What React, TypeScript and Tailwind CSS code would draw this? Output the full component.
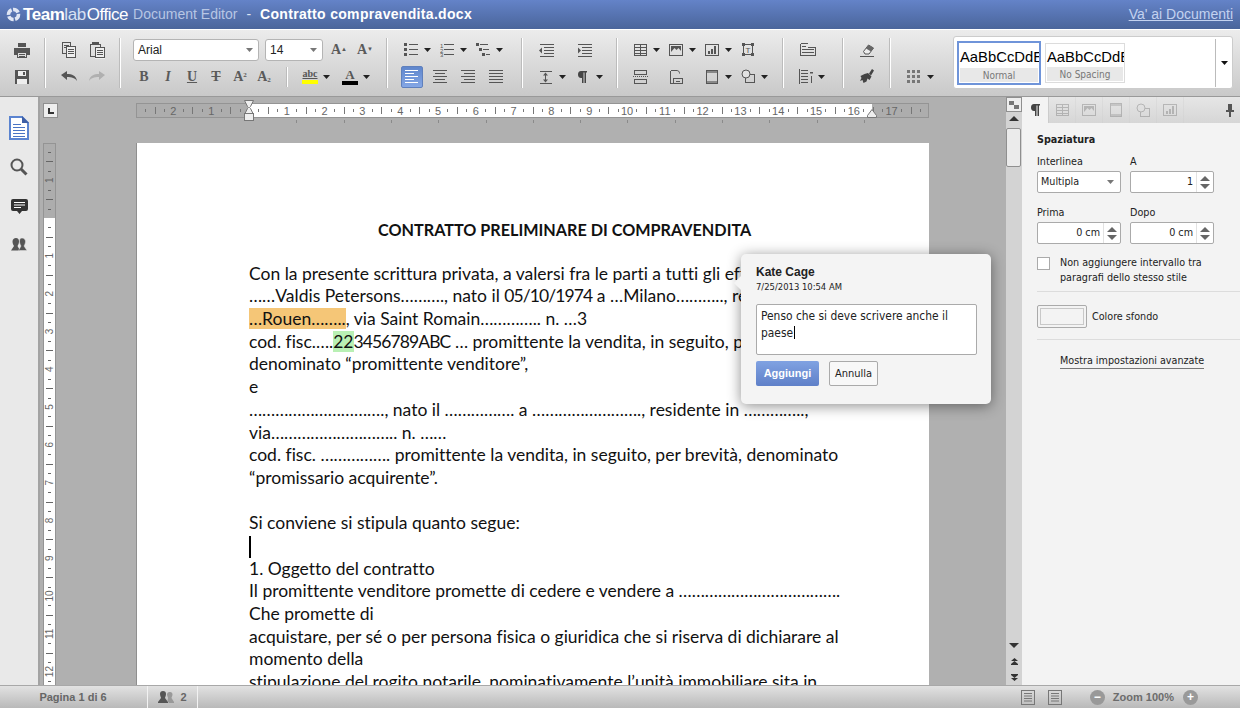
import type { ReactNode } from "react";

const sans = "font-['Liberation_Sans',Arial,sans-serif]";
const ui = "font-['DejaVu_Sans_Condensed','Noto_Sans',sans-serif]";

function I({ children, w = 18, h = 18 }: { children: ReactNode; w?: number; h?: number }) {
  return (
    <svg width={w} height={h} viewBox={`0 0 ${w} ${h}`} fill="none" stroke="#555" strokeWidth="1" className="shrink-0">
      {children}
    </svg>
  );
}

const P = ({ d, c = "#555" }: { d: string; c?: string }) => <path d={d} stroke={c} shapeRendering="crispEdges" />;
const F = ({ d, c = "#555" }: { d: string; c?: string }) => <path d={d} fill={c} stroke="none" />;

const Arrow = ({ c = "#222" }: { c?: string }) => (
  <svg width="7" height="4" viewBox="0 0 7 4" className="shrink-0">
    <path d="M0 0h7L3.5 4z" fill={c} />
  </svg>
);

const icons: Record<string, ReactNode> = {
  print: <I><F d="M5 2h8v4H5z" /><F d="M1 7h16v7h-3v-3H4v3H1z" /><P d="M4.5 11.5h9v5h-9z" /><P d="M6 13.5h6M6 15.5h6" /></I>,
  save: <I><F d="M2 2h14v14H2z" /><F d="M5 3h8v5H5z" c="#eee" /><F d="M4 11h10v5H4z" c="#eee" /><F d="M10 4h2v3h-2z" /></I>,
  copy: <I><P d="M2.5 1.5h8v11h-8zM4 4.5h5M4 6.5h5" /><F d="M6 5h10v12H6z" c="#eee" /><P d="M6.5 5.5h9v11h-9zM8 8.5h6M8 10.5h6M8 12.5h6" /></I>,
  paste: <I><P d="M2.5 3.5h10v12h-10z" /><F d="M4 1h7v3H4z" /><F d="M7 6h10v12H7z" c="#eee" /><P d="M7.5 6.5h9v10h-9zM9 9.5h6M9 11.5h6M9 13.5h6" /></I>,
  undo: <I><F d="M1 7l6-4v3c5 0 9 1.500 10 7-2-3-5-4-10-4v3z" /></I>,
  redo: <I><F d="M17 7l-6-4v3C6 6 2 7.500 1 13c2-3 5-4 10-4v3z" c="#b0b0b0" /></I>,
  bullets: <I w={14} h={14}><F d="M0 0h3v3H0zM0 5h3v3H0zM0 10h3v3H0z" /><P d="M5 1.500h9M5 6.500h9M5 11.500h9" /></I>,
  numbers: (
    <I w={14} h={14}>
      <text x="0" y="4.500" fontSize="6" fill="#555" stroke="none">1</text>
      <text x="0" y="9.500" fontSize="6" fill="#555" stroke="none">2</text>
      <text x="0" y="14" fontSize="6" fill="#555" stroke="none">3</text>
      <P d="M4 1.500h10M4 6.500h10M4 11.500h10" />
    </I>
  ),
  multi: <I w={14} h={14}><F d="M0 0h3v3H0zM3 5h3v3H3zM6 10h3v3H6z" /><P d="M4 1.500h8M7 6.500h6M10 11.500h4" /></I>,
  indentL: <I w={15} h={14}><P d="M1 1.500h14M5 4.500h10M5 7.500h10M5 10.500h10M1 13.500h14" /><F d="M3 4.500v6L0 7.500z" /></I>,
  indentR: <I w={15} h={14}><P d="M1 1.500h14M5 4.500h10M5 7.500h10M5 10.500h10M1 13.500h14" /><F d="M1 4.500v6l3-3z" /></I>,
  spacing: <I w={14} h={14}><P d="M1 1.500h12M1 13.500h12M6.500 4v7" /><F d="M6.500 2.500L9 5.500H4zM6.500 12.500L4 9.500h5z" /></I>,
  pilcrow: <I w={9} h={12}><F d="M3 0h6v1.500H8V12H6.500V1.500h-1V12H4V7h-1C1 7 0 5.500 0 3.500S1 0 3 0z" c="#444" /></I>,
  table: <I w={14} h={14}><P d="M1.500 1.500h12v11h-12zM1.500 4.500h12M1.500 7.500h12M1.500 10.500h12M7.500 1.500v11" /></I>,
  image: <I w={14} h={14}><P d="M.5 1.500h13v11H.5z" /><F d="M2 3h10v5L9.500 5 7.500 7 5.500 5 2 9z" /></I>,
  chart: <I w={14} h={14}><P d="M.5 1.500h13v11H.5z" /><F d="M3 8h2v3H3zM6 6h2v5H6zM9 3h2v8H9z" /></I>,
  textbox: <I w={14} h={14}><P d="M2.500 1.500h9v10h-9z" /><F d="M1 0h3v3H1zM10 0h3v3h-3zM1 10h3v3H1zM10 10h3v3h-3z" /><text x="4.500" y="10" fontSize="8" fill="#555" stroke="none">T</text></I>,
  pagebreak: <I w={15} h={14}><P d="M1.500 .5h12v4h-12zM1.500 9.500h12v4h-12z" /><path d="M0 6.500h15" stroke="#555" strokeDasharray="1 1" /></I>,
  footnote: <I w={15} h={14}><P d="M1.500 .5h6M1.500 .5v13h3" /><path d="M7.500 .5c2 0 3 1 3 3" stroke="#555" /><P d="M4.500 8.500h9v5h-9zM7 11h4" /></I>,
  header: <I w={13} h={14}><P d="M.5 .5h11v13H.5z" /><F d="M1 1h10v2H1zM1 11h10v2H1z" c="#888" /></I>,
  shape: <I w={15} h={15}><circle cx="5" cy="5" r="4" stroke="#555" fill="#e2e2e2" /><P d="M8.500 5.500h5v8h-9v-5" /></I>,
  columns: <I w={17} h={13}><P d="M.5 .5h7M.5 .5v12h15v-8h-8M2 3.500h4M2 6.500h12M2 9.500h12" /></I>,
  lineNum: <I w={15} h={15}><P d="M3 1.500h7M3 4.500h7M3 7.500h7M3 10.500h7M3 13.500h7M1.500 0v15" /><P d="M13.500 6.500v7" /><F d="M12 3h3v1.500h-3z" /></I>,
  eraser: <I w={16} h={16}><path d="M4.500 9.500l5-6.500 5 3-4.500 6H6z" fill="#ececec" stroke="#555" /><F d="M9.500 3l5 3-2.500 3.500-5-3z" c="#666" /><P d="M1 14.500h14" /></I>,
  brush: <I w={14} h={15}><F d="M9 4.500L12 0l2 1.500L11 6.500zM4.500 5L8 4l3.500 3.500-2 3.500-2-1.500-1 3L3.500 14 2.500 11 0 12l1.500-3-1-2z" c="#444" /></I>,
  grid: <I w={14} h={13}><F d="M0 0h3v3H0zM5 0h3v3H5zM10 0h3v3h-3zM0 5h3v3H0zM5 5h3v3H5zM10 5h3v3h-3zM0 10h3v3H0zM5 10h3v3H5zM10 10h3v3h-3z" c="#777" /></I>,
};

const align = (lines: number[], white = false, right = false) => (
  <svg width="14" height="14" viewBox="0 0 14 14" className="shrink-0">
    {lines.map((w, i) => {
      const x = right ? 14 - w : w === 10 && !white ? 2 : 0;
      return <rect key={i} x={x} y={i * 3 + 0} width={w} height="1" fill={white ? "#fff" : "#555"} />;
    })}
  </svg>
);

function Glyph({ children, italic = false }: { children: ReactNode; italic?: boolean }) {
  return (
    <span className={`font-['Liberation_Serif',serif] text-[14px] font-bold leading-none text-[#5a5a5a] ${italic ? "italic" : ""}`}>
      {children}
    </span>
  );
}

function Tool({ icon, arrow, spacer, width = "w-[36px]" }: { icon: ReactNode; arrow?: boolean; spacer?: boolean; width?: string }) {
  return (
    <div className={`flex h-[27px] shrink-0 items-center justify-center gap-[5px] ${width}`}>
      <div className="flex w-[16px] justify-center">{icon}</div>
      {arrow ? <Arrow /> : spacer ? <div className="w-[7px]" /> : null}
    </div>
  );
}

const Row = ({ children, pad = "" }: { children: ReactNode; pad?: string }) => <div className={`flex h-[27px] items-center ${pad}`}>{children}</div>;

const Sep = () => <div className="mt-[2px] h-[50px] w-[2px] shrink-0 border-r border-r-white bg-[#bcbcbc]" />;

function Combo({ label, width }: { label: string; width: string }) {
  return (
    <div className={`flex h-[22px] items-center justify-between rounded-[3px] border border-[#b4b4b4] bg-white pl-[4px] pr-[5px] text-[12px] text-[#222] ${width}`}>
      <span>{label}</span>
      <Arrow c="#777" />
    </div>
  );
}

function Toolbar() {
  return (
    <div className={`flex h-[66px] shrink-0 bg-gradient-to-b from-[#ececec] to-[#c9c9c9] pt-[6px] ${sans}`}>
      <div className="w-[44px]">
        <Tool icon={icons.print} width="w-[44px]" />
        <Tool icon={icons.save} width="w-[44px]" />
      </div>
      <Sep />
      <div className="w-[73px]">
        <Row pad="pl-[9px]"><Tool icon={icons.copy} width="w-[28px]" /><Tool icon={icons.paste} width="w-[28px]" /></Row>
        <Row pad="pl-[9px]"><Tool icon={icons.undo} width="w-[28px]" /><Tool icon={icons.redo} width="w-[28px]" /></Row>
      </div>
      <Sep />
      <div className="w-[265px]">
        <Row pad="pl-[12px]">
          <Combo label="Arial" width="w-[126px]" />
          <div className="ml-[6px]"><Combo label="14" width="w-[58px]" /></div>
          <div className="ml-[3px]"><Tool width="w-[26px]" icon={<Glyph>A<sup className="text-[6px]">▲</sup></Glyph>} /></div>
          <Tool width="w-[26px]" icon={<Glyph>A<sup className="text-[6px]">▼</sup></Glyph>} />
        </Row>
        <Row pad="pl-[11px]">
          <Tool width="w-[24px]" icon={<Glyph>B</Glyph>} />
          <Tool width="w-[24px]" icon={<Glyph italic>I</Glyph>} />
          <Tool width="w-[24px]" icon={<Glyph><span className="underline">U</span></Glyph>} />
          <Tool width="w-[24px]" icon={<Glyph><span className="line-through">T</span></Glyph>} />
          <Tool width="w-[24px]" icon={<Glyph>A<sup className="text-[7px]">2</sup></Glyph>} />
          <Tool width="w-[24px]" icon={<Glyph>A<sub className="text-[7px]">2</sub></Glyph>} />
          <div className="ml-[10px] h-[20px] w-[2px] border-r border-r-white bg-[#bcbcbc]" />
          <div className="ml-[10px]">
            <Tool arrow icon={<div className="flex flex-col items-center"><span className="font-['Liberation_Serif',serif] text-[10px] font-bold leading-[10px] text-[#555] underline">abc</span><div className="mt-[1px] h-[4px] w-[16px] bg-[#ffff00]" /></div>} />
          </div>
          <div className="ml-[4px]">
            <Tool arrow icon={<div className="flex flex-col items-center"><span className="font-['Liberation_Serif',serif] text-[13px] font-bold leading-[12px] text-[#555]">A</span><div className="h-[4px] w-[16px] bg-black" /></div>} />
          </div>
        </Row>
      </div>
      <Sep />
      <div className="w-[133px]">
        <Row pad="pl-[11px]"><Tool arrow icon={icons.bullets} /><Tool arrow icon={icons.numbers} /><Tool arrow icon={icons.multi} /></Row>
        <Row pad="pl-[10px]">
          <div className="flex w-[28px] justify-center">
            <div className="flex h-[22px] w-[22px] items-center justify-center rounded-[2px] border border-[#5f80bd] bg-gradient-to-b from-[#5f86cc] to-[#85a7e5]">{align([13, 9, 13, 9, 13], true)}</div>
          </div>
          <Tool width="w-[28px]" icon={align([14, 10, 14, 10, 14])} />
          <Tool width="w-[28px]" icon={align([14, 11, 14, 11, 14], false, true)} />
          <Tool width="w-[28px]" icon={align([14, 14, 14, 14, 14])} />
        </Row>
      </div>
      <Sep />
      <div className="w-[93px]">
        <Row pad="pl-[4px]"><Tool width="w-[38px]" icon={icons.indentL} /><Tool width="w-[38px]" icon={icons.indentR} /></Row>
        <Row pad="pl-[10px]"><Tool arrow width="w-[37px]" icon={icons.spacing} /><Tool arrow width="w-[37px]" icon={icons.pilcrow} /></Row>
      </div>
      <Sep />
      <div className="w-[164px]">
        <Row pad="pl-[10px]"><Tool arrow icon={icons.table} /><Tool arrow icon={icons.image} /><Tool arrow icon={icons.chart} /><Tool spacer icon={icons.textbox} /></Row>
        <Row pad="pl-[10px]"><Tool spacer icon={icons.pagebreak} /><Tool spacer icon={icons.footnote} /><Tool arrow icon={icons.header} /><Tool arrow icon={icons.shape} /></Row>
      </div>
      <Sep />
      <div className="w-[58px]">
        <Tool width="w-[48px]" icon={icons.columns} />
        <Row pad="pl-[9px]"><Tool arrow icon={icons.lineNum} /></Row>
      </div>
      <Sep />
      <div className="w-[45px]">
        <Tool width="w-[45px]" icon={icons.eraser} />
        <Tool width="w-[45px]" icon={icons.brush} />
      </div>
      <Sep />
      <div className="w-[62px] pt-[27px]">
        <Row pad="pl-[11px]"><Tool arrow icon={icons.grid} /></Row>
      </div>
      <div className="flex h-[53px] w-[280px] items-center rounded-[3px] border border-[#ccc] bg-white pl-[3px]">
        <StyleThumb label="Normal" active />
        <div className="ml-[4px]"><StyleThumb label="No Spacing" /></div>
        <div className="ml-auto flex h-[48px] w-[17px] items-center justify-center border-l border-l-[#bbb]"><Arrow c="#111" /></div>
      </div>
    </div>
  );
}

function StyleThumb({ label, active }: { label: string; active?: boolean }) {
  return (
    <div className={`flex flex-col overflow-hidden bg-white ${active ? "h-[44px] w-[84px] border-2 border-[#6f94d9]" : "h-[40px] w-[80px] border border-[#dcdcdc]"}`}>
      <div className={`min-h-0 flex-1 overflow-hidden whitespace-nowrap pl-[1px] text-[14.8px] leading-[20px] text-black ${active ? "pt-[4px]" : "pt-[3px]"}`}>AaBbCcDdEe</div>
      <div className={`mx-[1px] mb-[1px] h-[14px] shrink-0 bg-[#e8e8e8] text-center text-[10px] leading-[15px] text-[#777] ${ui}`}>{label}</div>
    </div>
  );
}

function HRuler() {
  const o = 113;
  const cm = 37.8;
  const marks = Array.from({ length: 84 }, (_, i) => i - 12);
  return (
    <svg width="793" height="24" className="block overflow-visible">
      <rect x="0.5" y="0.5" width="792" height="14" fill="#adadad" stroke="#949494" />
      <rect x={o} y="1" width="623" height="13" fill="#fff" />
      {marks.map((q) => {
        const x = o + (q * cm) / 4;
        if (x < 2 || x > 790) return null;
        if (q === 0) return null;
        if (q % 4 === 0)
          return <text key={q} x={x} y="11.500" fontSize="11" textAnchor="middle" fill="#666" fontFamily="Liberation Sans">{Math.abs(q / 4)}</text>;
        if (q % 2 === 0) return <rect key={q} x={Math.round(x)} y="4" width="1" height="7" fill="#777" />;
        return <rect key={q} x={Math.round(x)} y="6" width="1" height="3" fill="#777" />;
      })}
      {Array.from({ length: 13 }, (_, i) => (
        <rect key={i} x={Math.round(o + 47.3 * (i + 1))} y="17" width="1" height="3" fill="#8a8a8a" />
      ))}
      <path d="M108.500-2.500h9l-3 6 -1 1 1 1 3 6h-9l3-6 1-1-1-1z" fill="#eee" stroke="#777" />
      <rect x="108.500" y="10.500" width="9" height="7" fill="#eee" stroke="#777" />
      <path d="M731.500 12.500l4.500-6 4.500 6v2h-9z" fill="#eee" stroke="#777" />
    </svg>
  );
}

function VRuler() {
  const o = 75;
  const cm = 37.8;
  const marks = Array.from({ length: 59 }, (_, i) => i - 8);
  return (
    <svg width="13" height="560" className="block shrink-0">
      <rect x="0.5" y="0.5" width="12" height="559" fill="#fff" stroke="#949494" />
      <rect x="1" y="1" width="11" height={o - 1} fill="#adadad" />
      {marks.map((q) => {
        const y = o + (q * cm) / 4;
        if (y < 3 || q === 0) return null;
        if (q % 4 === 0)
          return <text key={q} x="6.500" y={y} fontSize="10" textAnchor="middle" dominantBaseline="central" fill="#666" fontFamily="Liberation Sans" transform={`rotate(-90 6.500 ${y})`}>{Math.abs(q / 4)}</text>;
        if (q % 2 === 0) return <rect key={q} x="3" y={Math.round(y)} width="7" height="1" fill="#666" />;
        return <rect key={q} x="5" y={Math.round(y)} width="3" height="1" fill="#666" />;
      })}
    </svg>
  );
}

const Num = ({ children }: { children: ReactNode }) => <span className="tracking-[-0.9px]">{children}</span>;

const docLines: ReactNode[] = [
  "Con la presente scrittura privata, a valersi fra le parti a tutti gli effetti di legge,",
  <>……Valdis Petersons………., nato il <Num>05/10/1974</Num> a …Milano……….., residente in</>,
  <><span className="bg-[#f5c677]">…Rouen……..</span>, via Saint Romain………….. n. …3</>,
  <>cod. fisc.….<span className="bg-[#b9f0b4]">22</span><Num>3456789ABC</Num> … promittente la vendita, in seguito, per brevità,</>,
  "denominato “promittente venditore”,",
  "e",
  "…………………………., nato il ……………. a ……………………., residente in …………..,",
  "via……………………….. n. ……",
  "cod. fisc. ……………. promittente la vendita, in seguito, per brevità, denominato",
  "“promissario acquirente”.",
  "\u00a0",
  "Si conviene si stipula quanto segue:",
  <span className="inline-block h-[22px] w-[2px] translate-y-[1px] bg-black" />,
  "1. Oggetto del contratto",
  "Il promittente venditore promette di cedere e vendere a ……………………………….",
  "Che promette di",
  "acquistare, per sé o per persona fisica o giuridica che si riserva di dichiarare al",
  "momento della",
  "stipulazione del rogito notarile, nominativamente l’unità immobiliare sita in",
];

function Sidebar() {
  return (
    <div className="flex w-[40px] shrink-0 flex-col items-center border-r-2 border-r-[#a3a3a3] bg-[#e9e9e9] pt-[19px]">
      <svg width="20" height="24" viewBox="0 0 20 24">
        <path d="M1 1h12l6 6v16H1z" fill="#fff" stroke="#5b84d0" strokeWidth="2" />
        <path d="M13 0l7 7h-7z" fill="#3e5fa5" />
        <path d="M4 8.500h8M4 11.500h12M4 14.500h12M4 17.500h12M4 20.500h12" stroke="#4a74c4" />
      </svg>
      <svg width="18" height="18" viewBox="0 0 18 18" className="mt-[18px]">
        <circle cx="7" cy="7" r="5.500" fill="none" stroke="#555" strokeWidth="2" />
        <path d="M11 11l5.500 5.500" stroke="#555" strokeWidth="3" />
      </svg>
      <svg width="17" height="16" viewBox="0 0 17 16" className="mt-[23px]">
        <path d="M2 0h13a2 2 0 0 1 2 2v8a2 2 0 0 1-2 2h-4l-2.500 3-2.500-3H2a2 2 0 0 1-2-2V2a2 2 0 0 1 2-2z" fill="#333" />
        <path d="M3 3.500h11M3 6h11M3 8.500h7" stroke="#fff" />
      </svg>
      <svg width="16" height="13" viewBox="0 0 16 13" className="mt-[23px]">
        <path d="M5 0c2 0 3 1.500 3 3.500S7 7 6.500 8L9 12.500H0L3 8C2.500 7 1.500 5.500 1.500 3.500S3 0 5 0z" fill="#555" />
        <path d="M11 0c2 0 3.500 1.500 3.500 3.500S13.500 7 13 8l3 4.500H7.500L10 8C9.500 7 8.500 5.500 8.500 3.500S9 0 11 0z" fill="#555" stroke="#e9e9e9" strokeWidth="0.500" />
      </svg>
    </div>
  );
}

function ScrollColumn() {
  return (
    <div className="flex w-[16px] shrink-0 flex-col items-center bg-[#d3d3d3]">
      <div className="flex h-[15px] w-[16px] items-center justify-center border border-[#8f8f8f] bg-[#eee]">
        <svg width="12" height="10" viewBox="0 0 12 10"><path d="M1 1h5v4H1zM6 5h5v4H6z" fill="#777" /></svg>
      </div>
      <div className="mt-[4px] h-0 w-0 border-x-[5px] border-b-[5px] border-x-transparent border-b-[#333]" />
      <div className="mt-[7px] h-[39px] w-[15px] self-start rounded-[2px] border border-[#8f8f8f] bg-[#ebebeb]" />
      <div className="mb-[10px] mt-auto h-0 w-0 border-x-[5px] border-t-[5px] border-x-transparent border-t-[#333]" />
      <svg width="7" height="7" viewBox="0 0 7 7" className="mb-[9px]"><path d="M3.500 0L7 3H0zM3.500 3L7 6H0z" fill="#333" /><rect x="0" y="6" width="7" height="1" fill="#333" /></svg>
      <svg width="7" height="7" viewBox="0 0 7 7" className="mb-[4px]"><rect x="0" y="0" width="7" height="1" fill="#333" /><path d="M0 1h7L3.500 4zM0 4h7L3.500 7z" fill="#333" /></svg>
    </div>
  );
}

const PanelCombo = ({ value }: { value: string }) => (
  <div className="flex h-[22px] w-[84px] items-center justify-between rounded-[2px] border border-[#aaa] bg-white pl-[3px] pr-[6px]">
    <span>{value}</span>
    <Arrow c="#777" />
  </div>
);

const Spin = ({ value }: { value: string }) => (
  <div className="flex h-[22px] w-[84px] items-center rounded-[2px] border border-[#aaa] bg-white">
    <span className="flex-1 pr-[3px] text-right">{value}</span>
    <div className="flex h-full w-[17px] flex-col items-center justify-center gap-[3px] border-l border-l-[#e2e2e2]">
      <div className="h-0 w-0 border-x-[5px] border-b-[5px] border-x-transparent border-b-[#666]" />
      <div className="h-0 w-0 border-x-[5px] border-t-[5px] border-x-transparent border-t-[#666]" />
    </div>
  </div>
);

function Panel() {
  const tabIcons = [icons.table, icons.image, icons.header, icons.shape, icons.chart];
  return (
    <div className={`flex w-[218px] shrink-0 flex-col bg-[#f3f3f3] text-[10.7px] leading-[14px] text-[#222] ${ui}`}>
      <div className="flex h-[26px] shrink-0 bg-gradient-to-b from-[#e6e6e6] to-[#d6d6d6]">
        <div className="flex w-[27px] items-center justify-center border-r border-r-[#ccc] bg-[#f3f3f3]">{icons.pilcrow}</div>
        {tabIcons.map((ic, i) => (
          <div key={i} className="flex w-[27px] items-center justify-center border-r border-r-[#ccc] opacity-30">{ic}</div>
        ))}
        <div className="ml-auto mr-[6px] flex items-center">
          <svg width="8" height="13" viewBox="0 0 8 13"><path d="M2 0h4v6h2v2H5v5H3V8H0V6h2z" fill="#555" /></svg>
        </div>
      </div>
      <div className="flex flex-1 flex-col pl-[15px] pt-[10px]">
        <div className="font-bold">Spaziatura</div>
        <div className="mt-[8px] flex gap-[9px]">
          <div className="w-[84px]">Interlinea<div className="mt-[2px]"><PanelCombo value="Multipla" /></div></div>
          <div className="w-[84px]">A<div className="mt-[2px]"><Spin value="1" /></div></div>
        </div>
        <div className="mt-[13px] flex gap-[9px]">
          <div className="w-[84px]">Prima<div className="mt-[2px]"><Spin value="0 cm" /></div></div>
          <div className="w-[84px]">Dopo<div className="mt-[2px]"><Spin value="0 cm" /></div></div>
        </div>
        <div className="mt-[13px] flex gap-[10px]">
          <div className="h-[13px] w-[13px] shrink-0 border border-[#aaa] bg-white" />
          <div className="mt-[-2px] leading-[15px]">Non aggiungere intervallo tra<br />paragrafi dello stesso stile</div>
        </div>
        <div className="mt-[6px] h-px bg-[#dcdcdc]" />
        <div className="mt-[13px] flex items-center gap-[5px]">
          <div className="h-[23px] w-[50px] rounded-[2px] border border-[#aaa] bg-[#f3f3f3] p-[2px]"><div className="h-full border border-[#c8c8c8]" /></div>
          <span>Colore sfondo</span>
        </div>
        <div className="mt-[11px] h-px bg-[#dcdcdc]" />
        <div className="ml-[23px] mt-[14px] self-start border-b border-b-[#777] leading-[14px]">Mostra impostazioni avanzate</div>
      </div>
    </div>
  );
}

function StatusBar() {
  return (
    <div className={`flex h-[23px] shrink-0 items-center border-t border-t-[#a8a8a8] bg-gradient-to-b from-[#e2e2e2] to-[#b9b9b9] text-[11px] font-bold text-[#666] ${sans}`}>
      <div className="flex h-full w-[148px] items-center justify-center border-r border-r-[#f2f2f2]"><span className="pr-[1px]">Pagina 1 di 6</span></div>
      <div className="flex h-full w-[50px] items-center justify-center gap-[6px] border-r border-r-[#f2f2f2]">
        <svg width="16" height="12" viewBox="0 0 16 12"><path d="M5 0a3 3 0 0 1 3 3c0 2-1 3-1 4l3 4v1H0v-1l3-4c0-1-1-2-1-4a3 3 0 0 1 3-3z" fill="#555" /><path d="M12 1a2.500 2.500 0 0 1 2.500 2.500c0 1.500-1 2.500-1 3.500L16 11v1h-5l-1.500-2L10 7c0-1-1-2-1-3.500A2.500 2.500 0 0 1 12 1z" fill="#999" /></svg>
        <span>2</span>
      </div>
      <div className="ml-auto flex items-center pr-[42px]">
        <svg width="14" height="15" viewBox="0 0 14 15"><rect x="0.500" y="0.500" width="13" height="14" fill="none" stroke="#777" /><path d="M3 3.500h8M3 6h8M3 8.500h8M3 11h8" stroke="#777" /></svg>
        <svg width="14" height="15" viewBox="0 0 14 15" className="ml-[13px]"><rect x="0.500" y="0.500" width="13" height="14" fill="none" stroke="#777" /><path d="M3 3.500h8M3 6h8M3 8.500h8M3 11h8" stroke="#777" /></svg>
        <div className="ml-[28px] flex h-[15px] w-[15px] items-center justify-center rounded-full bg-[#999] text-[12px] leading-none text-white">−</div>
        <span className="ml-[8px] text-[#6c6c6c]">Zoom 100%</span>
        <div className="ml-[9px] flex h-[15px] w-[15px] items-center justify-center rounded-full bg-[#999] text-[12px] leading-none text-white">+</div>
      </div>
    </div>
  );
}

export default function App() {
  return (
    <div className={`relative flex h-[708px] w-[1240px] flex-col overflow-hidden ${sans}`}>
      <header className="flex h-[29px] shrink-0 items-center bg-gradient-to-b from-[#6483c8] to-[#4a659b] pl-[6px] pr-[7px]">
        <svg width="15" height="15" viewBox="0 0 15 15">
          <circle cx="7.500" cy="7.500" r="5" fill="none" stroke="#dfe6f4" strokeWidth="3.500" strokeDasharray="6 1.500" />
        </svg>
        <span className="ml-[2px] text-[17px] leading-none tracking-[-0.45px] text-white"><span className="font-bold">Team</span><span className="text-[#d7e0f2]">lab</span><span className="ml-[1px]">Office</span></span>
        <span className="ml-[5px] text-[14px] text-[#b7c6e4]">Document Editor</span>
        <span className="ml-[9px] text-[14px] text-[#dfe6f4]">-</span>
        <span className="ml-[9px] text-[14px] font-bold tracking-[0.32px] text-white">Contratto compravendita.docx</span>
        <span className="ml-auto text-[14px] text-[#c3d2f0] underline">Va' ai Documenti</span>
      </header>
      <div className="h-px shrink-0 bg-white" />
      <Toolbar />
      <div className="flex min-h-0 flex-1 border-t border-t-[#999]">
        <Sidebar />
        <div className="flex min-w-0 flex-1 flex-col bg-[#b0b0b0]">
          <div className="flex h-[46px] shrink-0 pl-[3px] pt-[6px]">
            <div className="flex h-[15px] w-[15px] items-end justify-center border border-[#8f8f8f] bg-[#eee] pb-[3px]">
              <div className="h-[6px] w-[6px] border-b-2 border-l-2 border-[#333]" />
            </div>
            <div className="ml-[78px]"><HRuler /></div>
          </div>
          <div className="flex min-h-0 flex-1 overflow-hidden pl-[3px]">
            <VRuler />
            <div className="ml-[80px] w-[793px] shrink-0 border-l border-l-[#8f8f8f] bg-white pl-[112px] pt-[76px] font-['Lato','Carlito',sans-serif] text-[17.5px] leading-[22.7px] text-[#111] [font-variant-ligatures:none]">
              <div className="mb-[21px] whitespace-nowrap pl-[129px] text-[16.2px] font-bold">CONTRATTO PRELIMINARE DI COMPRAVENDITA</div>
              {docLines.map((line, i) => (
                <div key={i} className="h-[22.7px] whitespace-nowrap">{line}</div>
              ))}
            </div>
          </div>
        </div>
        <ScrollColumn />
        <Panel />
      </div>
      <StatusBar />

      <div className="absolute left-[741px] top-[254px] h-[150px] w-[250px] rounded-[5px] bg-[#f4f4f4] pl-[15px] pt-[11px] shadow-[0_2px_14px_rgba(0,0,0,0.45)]">
        <div className="absolute left-[-5px] top-[24px] h-[10px] w-[10px] rotate-45 bg-[#f4f4f4]" />
        <div className="text-[12px] font-bold leading-[14px] text-[#222]">Kate Cage</div>
        <div className={`mt-[1px] text-[9.4px] leading-[13px] text-[#222] ${ui}`}>7/25/2013 10:54 AM</div>
        <div className={`mt-[11px] h-[51px] w-[221px] rounded-[2px] border border-[#aaa] bg-white pl-[4px] pt-[3px] text-[11.9px] leading-[16px] text-[#222] ${ui}`}>
          Penso che si deve scrivere anche il<br />paese<span className="ml-px inline-block h-[13px] w-px translate-y-[2px] bg-black" />
        </div>
        <div className="mt-[6px] flex gap-[10px]">
          <div className="flex h-[25px] w-[63px] items-center justify-center rounded-[2px] bg-gradient-to-b from-[#80a2e2] to-[#5f80c8] text-[11px] font-bold text-white">Aggiungi</div>
          <div className={`flex h-[25px] w-[49px] items-center justify-center rounded-[2px] border border-[#aaa] bg-[#f8f8f8] pt-[2px] text-[11px] text-[#222] ${ui}`}>Annulla</div>
        </div>
      </div>
    </div>
  );
}
